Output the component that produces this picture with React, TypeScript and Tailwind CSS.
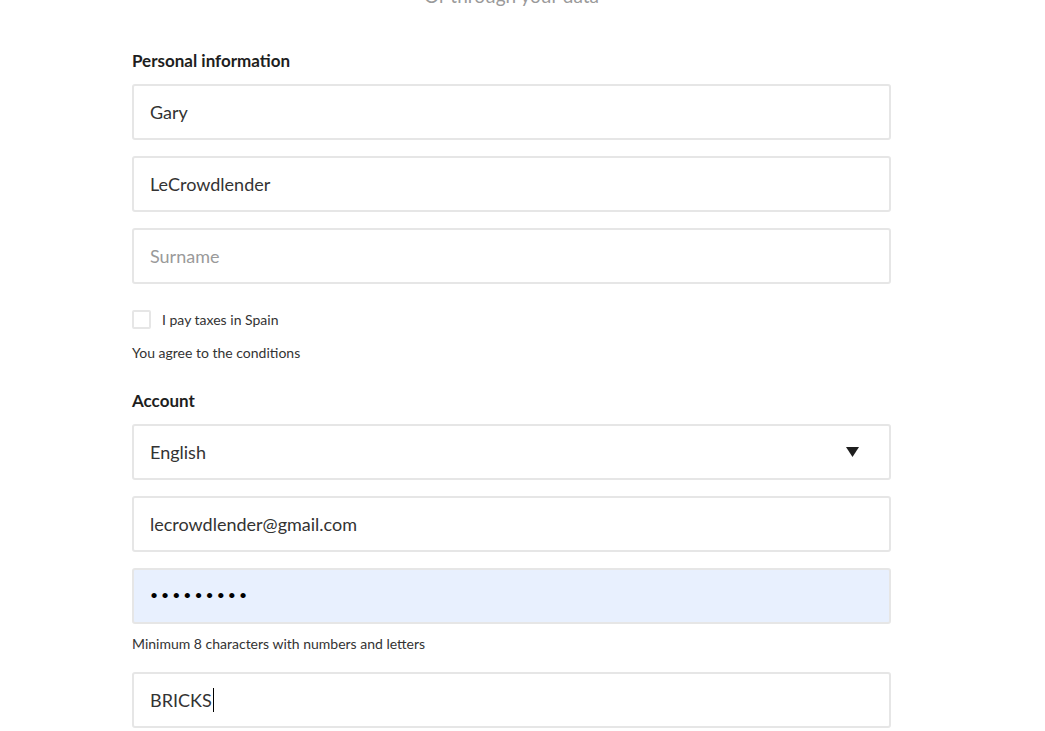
import React from "react";

const font = { fontFamily: "Lato, 'Noto Sans', sans-serif" };

function Field({
  children,
  className = "",
}: {
  children: React.ReactNode;
  className?: string;
}) {
  return (
    <div
      className={`flex h-[56px] items-center rounded-[3px] border-2 border-[#e6e6e6] px-[16px] text-[18px] text-[#333] ${className}`}
    >
      {children}
    </div>
  );
}

export default function App() {
  return (
    <div className="h-[731px] overflow-hidden bg-white" style={font}>
      <div className="ml-[132px] w-[759px]">
        <p className="-mt-[15px] h-[22px] text-center text-[19px] leading-[22px] text-[#9a9a9a]">
          Or through your data
        </p>

        <h2 className="mt-[44px] text-[17px] font-bold leading-[20px] text-[#1e1e1e]">
          Personal information
        </h2>

        <div className="mt-[13px] flex flex-col gap-[16px]">
          <Field>Gary</Field>
          <Field>LeCrowdlender</Field>
          <Field>
            <span className="text-[#9a9a9a]">Surname</span>
          </Field>
        </div>

        <label className="mt-[25px] flex items-center gap-[11px]">
          <span className="h-[19px] w-[19px] rounded-[2px] border-2 border-[#e6e6e6]" />
          <span className="text-[14px] text-[#333]">I pay taxes in Spain</span>
        </label>

        <p className="mt-[14px] text-[14px] leading-[18px] text-[#333]">
          You agree to the conditions
        </p>

        <h2 className="mt-[29px] text-[17px] font-bold leading-[20px] text-[#1e1e1e]">
          Account
        </h2>

        <div className="mt-[13px] flex flex-col gap-[16px]">
          <Field className="justify-between">
            <span>English</span>
            <svg width="13" height="10" viewBox="0 0 13 10" className="mr-[14px]">
              <path d="M0 0H13L6.5 10Z" fill="#1e1e1e" />
            </svg>
          </Field>
          <Field>lecrowdlender@gmail.com</Field>
          <Field className="border-[#e1e6ee] bg-[#e8f0fe]">
            <span className="-mt-[3px] text-[14px] tracking-[3px] text-black">•••••••••</span>
          </Field>
        </div>

        <p className="mt-[11px] text-[14px] leading-[18px] text-[#333]">
          Minimum 8 characters with numbers and letters
        </p>

        <div className="mt-[19px]">
          <Field>
            <span>BRICKS</span>
            <span className="ml-[1px] h-[24px] w-[1px] bg-black" />
          </Field>
        </div>
      </div>
    </div>
  );
}
